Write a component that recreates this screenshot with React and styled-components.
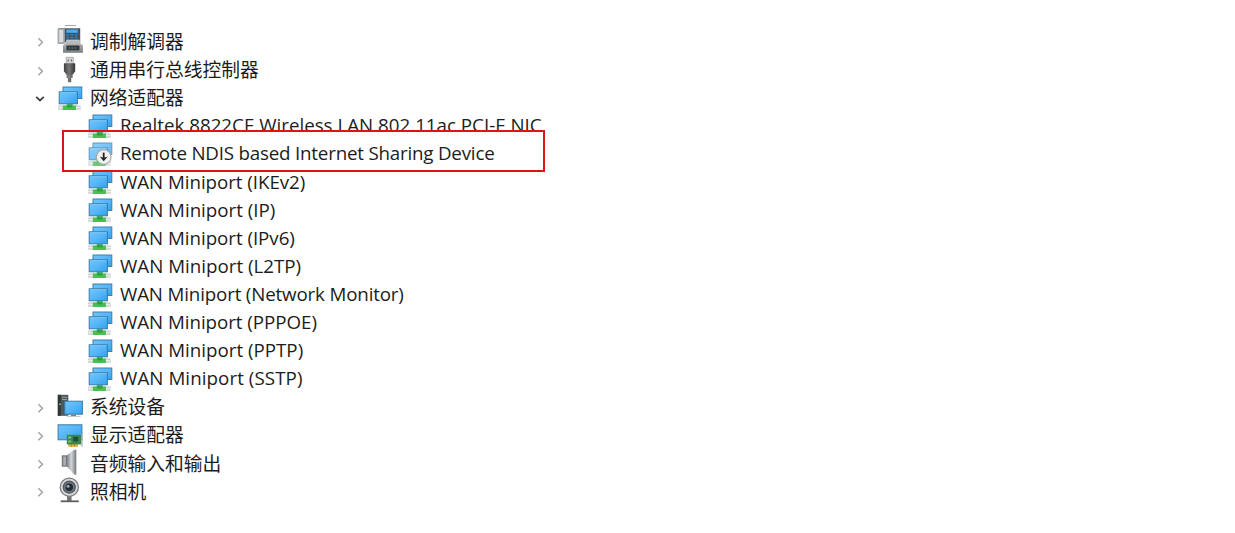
import React from "react";
import styled, { createGlobalStyle } from "styled-components";

const GlobalStyle = createGlobalStyle`
  body {
    margin: 0;
    background: #fff;
    overflow: hidden;
  }
`;

const Tree = styled.main`
  position: relative;
  box-sizing: border-box;
  height: 533px;
  padding: 27.4px 0 0 33px;
  color: #1c1c1c;
  font-family: "Open Sans", "Noto Sans CJK SC", sans-serif;
`;

const Group = styled.ul`
  margin: 0;
  padding: 0 0 0 ${(p) => (p.$nested ? "30px" : "0")};
  list-style: none;
`;

const Row = styled.div`
  position: relative;
  display: flex;
  align-items: center;
  height: 28.13px;
`;

const Toggle = styled.span`
  display: flex;
  flex: none;
  width: 14px;
  height: 14px;
  margin-right: 10px;
  padding-top: 2px;
`;

const Glyph = styled.svg`
  flex: none;
  width: 26px;
  height: 26px;
  overflow: visible;
`;

const Label = styled.span`
  margin-left: 7px;
  padding-bottom: ${(p) => (p.$latin ? "1.1px" : "1.5px")};
  font-family: ${(p) =>
    p.$latin ? '"Open Sans", sans-serif' : '"Noto Sans CJK SC", sans-serif'};
  font-size: 18.75px;
  line-height: 26px;
  letter-spacing: ${(p) => p.$tracking || 0}px;
  white-space: nowrap;
`;

const Highlight = styled.div`
  position: absolute;
  top: -9.8px;
  left: -1px;
  box-sizing: border-box;
  width: 483px;
  height: 42px;
  border: 2px solid #dc1414;
  pointer-events: none;
`;

const Remnant = styled.div`
  position: absolute;
  top: 25px;
  left: 65px;
  width: 11px;
  height: 1px;
  background: #a9a9a9;
`;

const Gradients = () => (
  <svg width="0" height="0" style={{ position: "absolute" }}>
    <defs>
      <linearGradient id="screen" x1="0" y1="0" x2="1" y2="1">
        <stop offset="0" stopColor="#72c6fb" />
        <stop offset=".5" stopColor="#56b6f8" />
        <stop offset="1" stopColor="#2ea0ef" />
      </linearGradient>
      <linearGradient id="metal" x1="0" y1="0" x2="1" y2="0">
        <stop offset="0" stopColor="#7b8086" />
        <stop offset=".45" stopColor="#d4d7da" />
        <stop offset="1" stopColor="#7d8288" />
      </linearGradient>
      <linearGradient id="fax" x1="0" y1="0" x2="0" y2="1">
        <stop offset="0" stopColor="#c9cbcc" />
        <stop offset="1" stopColor="#777b7e" />
      </linearGradient>
      <linearGradient id="plug" x1="0" y1="0" x2="1" y2="0">
        <stop offset="0" stopColor="#404040" />
        <stop offset=".45" stopColor="#777" />
        <stop offset="1" stopColor="#353535" />
      </linearGradient>
    </defs>
  </svg>
);

const Chevron = ({ open }) => (
  <svg width="14" height="14" viewBox="0 0 14 14" fill="none">
    {open ? (
      <path d="M3.2 4.8 7 8.4l3.8-3.6" stroke="#444" strokeWidth="1.8" />
    ) : (
      <path d="M5.4 3.2 9.4 7.2l-4 4" stroke="#a3a3a3" strokeWidth="1.5" />
    )}
  </svg>
);

const NetworkShapes = () => (
  <>
    <rect x="1" y="20.4" width="22.7" height="4.4" fill="#d3d5d5" />
    <path d="M1 22.6h22.7" stroke="#eeefef" />
    <path d="M9.7 18.5h6v2h3.2v4.4H5.8v-4.4h3.9z" fill="#4bbd55" />
    <path d="M10 20.3h5.4v2H10z" fill="#279c3a" />
    <rect x="6" y="2" width="18.8" height="11.5" fill="url(#screen)" stroke="#3f7fa9" />
    <rect x="2.2" y="6.8" width="18.2" height="12" fill="url(#screen)" stroke="#397ca8" />
    <path d="M3.2 7.7h16.2" stroke="#8cd2fb" strokeWidth=".7" />
  </>
);

const icons = {
  network: <NetworkShapes />,
  pending: (
    <>
      <g opacity=".8">
        <NetworkShapes />
      </g>
      <circle cx="16.7" cy="16" r="7.4" fill="#f1f1f1" stroke="#a6a6a6" strokeWidth="1.1" />
      <path d="M16.7 11.6v6.6" stroke="#222" strokeWidth="1.8" />
      <path d="m12.7 15.5 4 4.8 4-4.8-2.8.9h-2.4z" fill="#222" />
    </>
  ),
  modem: (
    <>
      <path d="M1.3.3h21.9v14H1.3z" fill="#45515b" />
      <path d="M.5.8 7.8.4v15.5H.5z" fill="#a8acaf" />
      <path d="M2.2 2h3.9v12H2.2z" fill="#dadcdd" />
      <path d="M9.3 1.5h11.5v3.3H9.3z" fill="#48aef0" />
      <path d="M9.3 7h11.5M9.3 9.5h11.5M9.3 12h11.5" stroke="#2685c8" strokeWidth="1.5" strokeDasharray="2.8 1.4" />
      <path d="M9.5 11.7h13l1.1 4 2.3 1.5v7.6H6v-7.6l2.3-1.5z" fill="url(#fax)" />
      <path d="M10.4 13h11.2l.7 3H9.6z" fill="#b7b9ba" />
      <rect x="9.5" y="17.4" width="13" height="4.8" rx=".8" fill="#30383c" />
      <path d="M11.6 20h8.8" stroke="#5c9389" strokeDasharray="1.8 1.1" />
    </>
  ),
  usb: (
    <>
      <path d="M9.2.3h7.1v6.5H9.2z" fill="#d3d3d3" stroke="#a2a2a2" strokeWidth=".8" />
      <path d="M10.6 2.4h1.2v2h-1.2zm3.2 0H15v2h-1.2z" fill="#6f6f6f" />
      <path d="M6.9 6.2h11.3v8l-2.7 3.9v3h-1.3v4.2h-3.3v-4.2H9.7v-3l-2.8-3.9z" fill="url(#plug)" />
      <path d="M9.8 18.8h5.7M9.8 20.6h5.7" stroke="#999" strokeWidth=".6" />
    </>
  ),
  system: (
    <>
      <path d="M.8.8h10.5v21H.8z" fill="#50575b" />
      <path d="M.8.8h3v21h-3z" fill="#2f363a" />
      <path d="M5 3.3h5M5 5.5h5" stroke="#99a1a5" />
      <circle cx="3" cy="10.2" r="1" fill="#58d56b" />
      <path d="M9.8 21.8h13.7v1.3H9.8z" fill="#c4cacd" />
      <rect x="7.8" y="7.2" width="17.6" height="13" fill="url(#screen)" stroke="#397ca8" />
      <path d="M14 20.6h5v1.4h-5z" fill="#777f83" />
    </>
  ),
  display: (
    <>
      <rect x="1.1" y="2.8" width="23.8" height="15" fill="url(#screen)" stroke="#397ca8" />
      <path d="M11.3 20.8h9.8v4h-9.8z" fill="#e6ac2e" />
      <path d="M14.4 21v3.8m3.2-3.8v3.8" stroke="#b47d16" strokeWidth=".7" />
      <path d="M9.8 12.8h14.6v9.6H9.8z" fill="#388650" />
      <path d="M11.2 14.4h3v2h-3zm0 4.2h3v2h-3z" fill="#82bd78" />
      <path d="M16.2 14.8h5v4.6h-5z" fill="#214c39" />
      <path d="M24.9 11.5v13.2" stroke="#a9b0b2" strokeWidth="1.3" />
    </>
  ),
  audio: (
    <>
      <path d="M4.8 5.3h5.3v11.4H4.8z" fill="#70767b" />
      <path d="M6.2 6.5H9v9H6.2z" fill="#a8adb1" />
      <path d="M10 5.3 17-.2h2.2v24.8H17l-7-8z" fill="url(#metal)" />
      <path d="M17.7 0h1.5v24.5h-1.5z" fill="#858a8e" />
    </>
  ),
  camera: (
    <>
      <path d="M10 18h4.6v5H10z" fill="#777" />
      <path d="M3.7 22.4h18v1.8h-18z" fill="#5c5c5c" />
      <circle cx="12.3" cy="9.2" r="9.1" fill="#d8d9da" stroke="#7b7d80" strokeWidth="1.3" />
      <circle cx="12.3" cy="9.2" r="6" fill="#6e767d" stroke="#54585c" strokeWidth="1.2" />
      <circle cx="12.3" cy="9.2" r="3.7" fill="#222a34" />
      <circle cx="11.1" cy="8.2" r="1.5" fill="#90abc2" />
    </>
  ),
};

const Icon = ({ name }) => <Glyph viewBox="0 0 26 26">{icons[name]}</Glyph>;

const adapters = [
  { name: "Realtek 8822CE Wireless LAN 802.11ac PCI-E NIC", tracking: 0 },
  { name: "Remote NDIS based Internet Sharing Device", tracking: -0.2 },
  { name: "WAN Miniport (IKEv2)", tracking: -0.05 },
  { name: "WAN Miniport (IP)", tracking: -0.02 },
  { name: "WAN Miniport (IPv6)", tracking: -0.04 },
  { name: "WAN Miniport (L2TP)", tracking: 0 },
  { name: "WAN Miniport (Network Monitor)", tracking: -0.16 },
  { name: "WAN Miniport (PPPOE)", tracking: -0.05 },
  { name: "WAN Miniport (PPTP)", tracking: 0 },
  { name: "WAN Miniport (SSTP)", tracking: 0.07 },
];

const highlightedIndex = 1;

const categories = [
  { name: "调制解调器", icon: "modem" },
  { name: "通用串行总线控制器", icon: "usb" },
  { name: "网络适配器", icon: "network", devices: adapters },
  { name: "系统设备", icon: "system" },
  { name: "显示适配器", icon: "display" },
  { name: "音频输入和输出", icon: "audio" },
  { name: "照相机", icon: "camera" },
];

const DeviceRow = styled(Row)`
  padding-left: 24px;
  z-index: ${(p) => (p.$raised ? 1 : 0)};
`;

const Device = ({ device, highlighted }) => (
  <li>
    <DeviceRow $raised={highlighted}>
      <Icon name={highlighted ? "pending" : "network"} />
      <Label $latin $tracking={device.tracking}>
        {device.name}
      </Label>
      {highlighted && <Highlight />}
    </DeviceRow>
  </li>
);

export default function App() {
  return (
    <>
      <GlobalStyle />
      <Gradients />
      <Tree>
        <Remnant />
        <Group>
          {categories.map((c) => (
            <li key={c.name}>
              <Row>
                <Toggle>
                  <Chevron open={!!c.devices} />
                </Toggle>
                <Icon name={c.icon} />
                <Label>{c.name}</Label>
              </Row>
              {c.devices && (
                <Group $nested>
                  {c.devices.map((d, i) => (
                    <Device key={d.name} device={d} highlighted={i === highlightedIndex} />
                  ))}
                </Group>
              )}
            </li>
          ))}
        </Group>
      </Tree>
    </>
  );
}
